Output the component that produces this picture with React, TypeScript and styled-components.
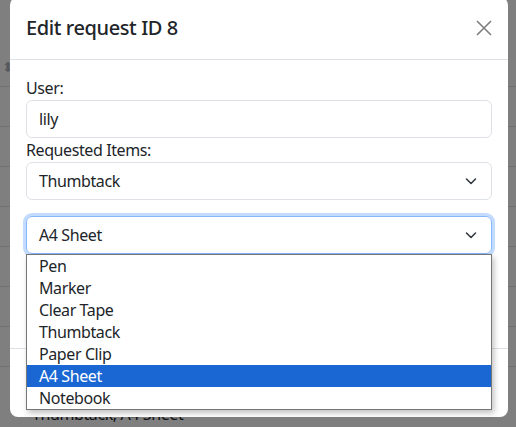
import React from 'react'
import styled, { createGlobalStyle } from 'styled-components'

const GlobalStyle = createGlobalStyle`
  html, body {
    margin: 0;
    padding: 0;
    background: #ffffff;
  }
  body {
    font-family: 'Noto Sans', 'Liberation Sans', sans-serif;
    color: #212529;
    font-size: 16px;
    line-height: 1.5;
    letter-spacing: -0.4px;
    overflow: hidden;
  }
`

const Page = styled.div`
  width: 516px;
  height: 427px;
  position: relative;
  overflow: hidden;
`

const Table = styled.div`
  padding-top: 46px;
  display: flex;
  flex-direction: column;
`

const HeadRow = styled.div`
  height: 40px;
  border-bottom: 1px solid #dee2e6;
  display: flex;
  align-items: center;
  padding-left: 2px;
  color: #adb5bd;
  font-size: 14px;
`

const Row = styled.div<{ $tall?: boolean }>`
  height: ${(p) => (p.$tall ? 64 : 40)}px;
  border-bottom: 1px solid #dee2e6;
  padding: ${(p) => (p.$tall ? 35 : 8)}px 0 0 32px;
  box-sizing: border-box;
`

const Backdrop = styled.div`
  position: absolute;
  inset: 0;
  background: rgba(0, 0, 0, 0.5);
`

const Dialog = styled.div`
  position: absolute;
  left: 10px;
  top: -3px;
  width: 498px;
  background: #fff;
  border-radius: 8px;
  display: flex;
  flex-direction: column;
`

const Header = styled.div`
  display: flex;
  align-items: center;
  justify-content: space-between;
  padding: 16px;
  border-bottom: 1px solid #dee2e6;
`

const Title = styled.h5`
  margin: 0;
  font-size: 20px;
  font-weight: 500;
  line-height: 30px;
`

const CloseButton = styled.button`
  width: 32px;
  height: 32px;
  border: 0;
  background: transparent;
  padding: 8px;
  margin: -1px -8px -1px 0;
  display: flex;
  align-items: center;
  justify-content: center;
  opacity: 0.5;
`

const Body = styled.div`
  padding: 16px;
  display: flex;
  flex-direction: column;
`

const Label = styled.label`
  display: block;
  line-height: 24px;
`

const Field = styled.div<{ $focus?: boolean }>`
  height: 38px;
  box-sizing: border-box;
  border: 1px solid ${(p) => (p.$focus ? '#86b7fe' : '#dee2e6')};
  border-radius: 6px;
  padding: 0 12px;
  display: flex;
  align-items: center;
  justify-content: space-between;
  position: relative;
  box-shadow: ${(p) => (p.$focus ? '0 0 0 3px rgba(13, 110, 253, 0.25)' : 'none')};
`

const Chevron = () => (
  <svg width="16" height="16" viewBox="0 0 16 16" fill="none">
    <path d="M3.5 6l4.5 4.5L12.5 6" stroke="#343a40" strokeWidth="1.6" strokeLinecap="round" strokeLinejoin="round" />
  </svg>
)

const SelectWrap = styled.div`
  position: relative;
  margin-top: 16px;
`

const Popup = styled.div`
  position: absolute;
  left: 0;
  right: 0;
  top: 38px;
  background: #fff;
  border: 1px solid #767676;
  box-shadow: 2px 3px 6px rgba(0, 0, 0, 0.25);
  z-index: 2;
`

const Option = styled.div<{ $selected?: boolean }>`
  height: 22px;
  line-height: 22px;
  padding-left: 12px;
  background: ${(p) => (p.$selected ? '#1a67d3' : 'transparent')};
  color: ${(p) => (p.$selected ? '#fff' : '#212529')};
`

const Spacer = styled.div`
  height: 78px;
`

const Footer = styled.div`
  border-top: 1px solid #dee2e6;
  height: 68px;
`

const options = ['Pen', 'Marker', 'Clear Tape', 'Thumbtack', 'Paper Clip', 'A4 Sheet', 'Notebook']

export default function App() {
  return (
    <Page>
      <GlobalStyle />
      <Table>
        <HeadRow>⬍</HeadRow>
        <Row />
        <Row />
        <Row />
        <Row />
        <Row />
        <Row />
        <Row />
        <Row $tall>Thumbtack, A4 Sheet</Row>
      </Table>
      <Backdrop />
      <Dialog>
        <Header>
          <Title>Edit request ID 8</Title>
          <CloseButton aria-label="Close">
            <svg width="16" height="16" viewBox="0 0 16 16">
              <path d="M1 1l14 14M15 1L1 15" stroke="#000" strokeWidth="1.6" />
            </svg>
          </CloseButton>
        </Header>
        <Body>
          <Label>User:</Label>
          <Field>lily</Field>
          <Label>Requested Items:</Label>
          <Field>
            Thumbtack
            <Chevron />
          </Field>
          <SelectWrap>
            <Field $focus>
              A4 Sheet
              <Chevron />
            </Field>
            <Popup>
              {options.map((o) => (
                <Option key={o} $selected={o === 'A4 Sheet'}>
                  {o}
                </Option>
              ))}
            </Popup>
          </SelectWrap>
          <Spacer />
        </Body>
        <Footer />
      </Dialog>
    </Page>
  )
}
